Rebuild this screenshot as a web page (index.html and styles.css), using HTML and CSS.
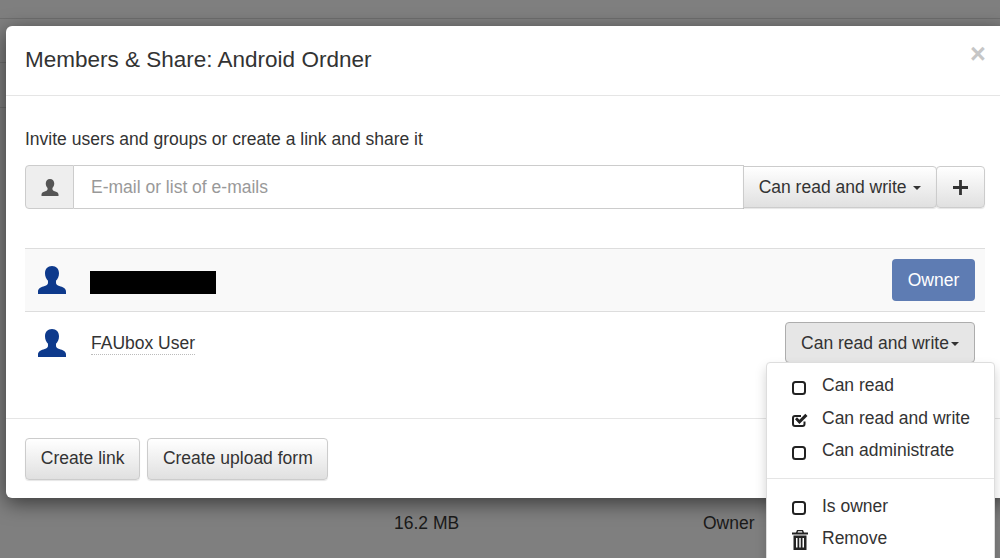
FILE: index.html
```html
<!DOCTYPE html>
<html lang="en">
<head>
<meta charset="utf-8">
<title>Members &amp; Share</title>
<link rel="stylesheet" href="styles.css">
</head>
<body>
<svg class="defs" width="0" height="0">
  <symbol id="user" viewBox="0 0 30 30">
    <path d="M15 0c-4.600 0-7.500 3.200-7.500 7.800 0 3.400 1.300 6 3.200 8v2.500c0 1.600-1.500 2.600-5 3.700C2.500 23 0 24.300 0 27.500V30h30v-2.500c0-3.200-2.500-4.500-5.700-5.500-3.500-1.100-5-2.100-5-3.700v-2.500c1.900-2 3.200-4.600 3.200-8C22.500 3.200 19.600 0 15 0z"/>
  </symbol>
  <symbol id="box" viewBox="0 0 14 14">
    <rect x="1" y="1" width="12" height="12" rx="2.500" fill="none" stroke="currentColor" stroke-width="2"/>
  </symbol>
</svg>

<div class="page-bg">
  <div class="bg-row bg-row-a"></div>
  <div class="bg-row bg-row-b"></div>
  <div class="bg-row bg-row-c"></div>
  <div class="bg-file"><span class="bg-size">16.2 MB</span><span class="bg-role">Owner</span></div>
</div>

<div class="modal">
  <header class="modal-header">
    <h4 class="modal-title">Members &amp; Share: Android Ordner</h4>
    <span class="close">×</span>
  </header>
  <section class="modal-body">
    <p class="intro">Invite users and groups or create a link and share it</p>
    <div class="input-group">
      <span class="addon"><svg class="addon-icon"><use href="#user"/></svg></span>
      <span class="email">E-mail or list of e-mails</span>
      <button class="btn btn-mode">Can read and write <i class="caret"></i></button>
      <button class="btn btn-plus"><svg class="plus-icon" viewBox="0 0 16 16"><path d="M6.500 0h3v6.500H16v3H9.500V16h-3V9.500H0v-3h6.500z"/></svg></button>
    </div>
    <div class="member member-owner">
      <svg class="member-icon"><use href="#user"/></svg>
      <span class="redacted"></span>
      <span class="owner-badge">Owner</span>
    </div>
    <div class="member">
      <svg class="member-icon"><use href="#user"/></svg>
      <span class="member-name">FAUbox User</span>
      <button class="btn-open">Can read and write<i class="caret"></i></button>
    </div>
  </section>
  <footer class="modal-footer">
    <button class="btn btn-foot">Create link</button>
    <button class="btn btn-foot">Create upload form</button>
  </footer>
</div>

<ul class="menu">
  <li class="menu-item"><svg class="check"><use href="#box"/></svg><span>Can read</span></li>
  <li class="menu-item"><svg class="check check-on" viewBox="0 0 16 14"><path class="check-frame" d="M12.500 8.500V11a2 2 0 0 1-2 2H3a2 2 0 0 1-2-2V5a2 2 0 0 1 2-2h6"/><path d="M3 6.300l2-2 2.400 2.400L13.300.800 15.500 3 7.400 11z"/></svg><span>Can read and write</span></li>
  <li class="menu-item"><svg class="check"><use href="#box"/></svg><span>Can administrate</span></li>
  <li class="menu-divider"></li>
  <li class="menu-item"><svg class="check"><use href="#box"/></svg><span>Is owner</span></li>
  <li class="menu-item"><svg class="trash" viewBox="0 0 16 20"><path d="M5 0h6l1 2.500h4v2H0v-2h4zM6 1.300l-.4 1.200h4.800L10 1.300zM1.500 5.500h13V20h-13zM4 8v9.500h1.500V8zm3.250 0v9.500h1.500V8zm3.250 0v9.500H12V8z" fill-rule="evenodd"/></svg><span>Remove</span></li>
</ul>
</body>
</html>
```

FILE: styles.css
```css
* { box-sizing: border-box; }
html, body { margin: 0; height: 558px; overflow: hidden; }
body {
  position: relative;
  background: #7f7f7f;
  font-family: "Liberation Sans", Arial, sans-serif;
  font-size: 17.500px;
  color: #333;
}
.defs { position: absolute; }

.page-bg { display: flex; flex-direction: column; height: 558px; }
.bg-row { border-bottom: 1px solid #6f6f6f; height: 45px; }
.bg-row-a { height: 19px; }
.bg-row-b { height: 44px; }
.bg-file { position: relative; margin-top: auto; height: 47px; color: #1a1a1a; }
.bg-size { position: absolute; left: 394px; top: 2px; }
.bg-role { position: absolute; left: 703px; top: 2px; }

.modal {
  position: absolute;
  left: 6px;
  top: 26px;
  width: 1000px;
  height: 472px;
  background: #fff;
  border-radius: 6px;
  box-shadow: 0 5px 20px rgba(0, 0, 0, .55);
  display: flex;
  flex-direction: column;
}
.modal-header {
  height: 70px;
  flex: none;
  border-bottom: 1px solid #e5e5e5;
  padding: 0 19px;
  display: flex;
  align-items: center;
}
.modal-title {
  margin: 0;
  font-size: 22.500px;
  font-weight: 400;
  line-height: 1.1;
  padding-bottom: 1px;
}
.close {
  position: absolute;
  left: 964px;
  top: 15px;
  font-size: 27px;
  font-weight: 700;
  line-height: 1;
  color: #c6c6c6;
}
.modal-body { flex: 1; padding: 33px 0 0 19px; width: 979px; }
.intro { margin: 0 0 16px; line-height: 20px; }

.input-group { display: flex; align-items: center; height: 44px; margin-bottom: 39px; }
.addon {
  flex: none;
  width: 49px;
  height: 44px;
  background: #eee;
  border: 1px solid #ccc;
  border-radius: 4px 0 0 4px;
  display: flex;
  align-items: center;
  justify-content: center;
}
.addon-icon { width: 18px; height: 17px; fill: #555; margin-top: 1px; }
.email {
  flex: none;
  width: 670px;
  height: 44px;
  border: 1px solid #ccc;
  border-left: 0;
  padding-left: 17px;
  line-height: 42px;
  color: #999;
}
.btn {
  font: inherit;
  color: #333;
  height: 42px;
  padding: 0;
  border: 1px solid #ccc;
  border-radius: 4px;
  background: linear-gradient(#fff, #e0e0e0);
  box-shadow: 0 1px 1px rgba(0, 0, 0, .1);
}
.btn-mode { flex: none; width: 194px; border-radius: 0 4px 4px 0; margin-left: -1px; }
.btn-plus {
  flex: none;
  width: 49px;
  margin-left: -1px;
  display: flex;
  align-items: center;
  justify-content: center;
}
.plus-icon { width: 15px; height: 15px; fill: #333; margin-top: 1px; }
.caret {
  display: inline-block;
  width: 0;
  height: 0;
  margin-left: 2px;
  vertical-align: middle;
  border-top: 4.500px solid #333;
  border-left: 4.500px solid transparent;
  border-right: 4.500px solid transparent;
}
.member {
  height: 63px;
  border-top: 1px solid #ddd;
  padding: 0 10px 0 12px;
  display: flex;
  align-items: center;
}
.member-owner { background: #f9f9f9; border-bottom: 1px solid #ddd; height: 64px; }
.member + .member { border-top: 0; height: 62px; }
.member-icon { flex: none; width: 30px; height: 28px; fill: #0e3a8c; }
.redacted { width: 126px; height: 23px; background: #000; margin: 4px 0 0 23px; }
.member-name {
  margin-left: 24px;
  line-height: 21px;
  border-bottom: 1px dotted #bbb;
  margin-top: 1px;
}
.owner-badge {
  margin-left: auto;
  width: 83px;
  height: 42px;
  background: #5e7cb3;
  border-radius: 4px;
  color: #fff;
  text-align: center;
  line-height: 42px;
}
.btn-open {
  margin-left: auto;
  font: inherit;
  color: #333;
  width: 190px;
  height: 41px;
  padding: 1px 0 0;
  background: #e6e6e6;
  border: 1px solid #adadad;
  border-radius: 4px;
  margin-top: -1px;
}
.modal-footer {
  flex: none;
  height: 80px;
  width: 994px;
  border-top: 1px solid #e5e5e5;
  padding: 19px 19px 0;
  display: flex;
  gap: 7px;
  align-items: flex-start;
}
.btn-foot { padding: 0 14.750px 1px; }

.menu {
  position: absolute;
  left: 766px;
  top: 362px;
  width: 229px;
  height: 220px;
  margin: 0;
  padding: 7px 0 0;
  list-style: none;
  background: #fff;
  border: 1px solid #ddd;
  border-radius: 4px;
  box-shadow: 0 6px 12px rgba(0, 0, 0, .175);
}
.menu-item { display: flex; align-items: center; height: 32.500px; padding-left: 25px; }
.menu-item span { margin-left: 16px; line-height: 20px; margin-top: -2px; }
.check { flex: none; width: 14px; height: 14px; color: #222; fill: #222; margin-top: 3px; }
.check-on { width: 16px; margin-right: -2px; }
.check-frame { fill: none; stroke: #222; stroke-width: 2; }
.trash { flex: none; width: 16px; height: 20px; fill: #222; margin: 2px -2px 0 0; }
.menu-divider { height: 1px; background: #e5e5e5; margin: 10px 0 12px; }
```
